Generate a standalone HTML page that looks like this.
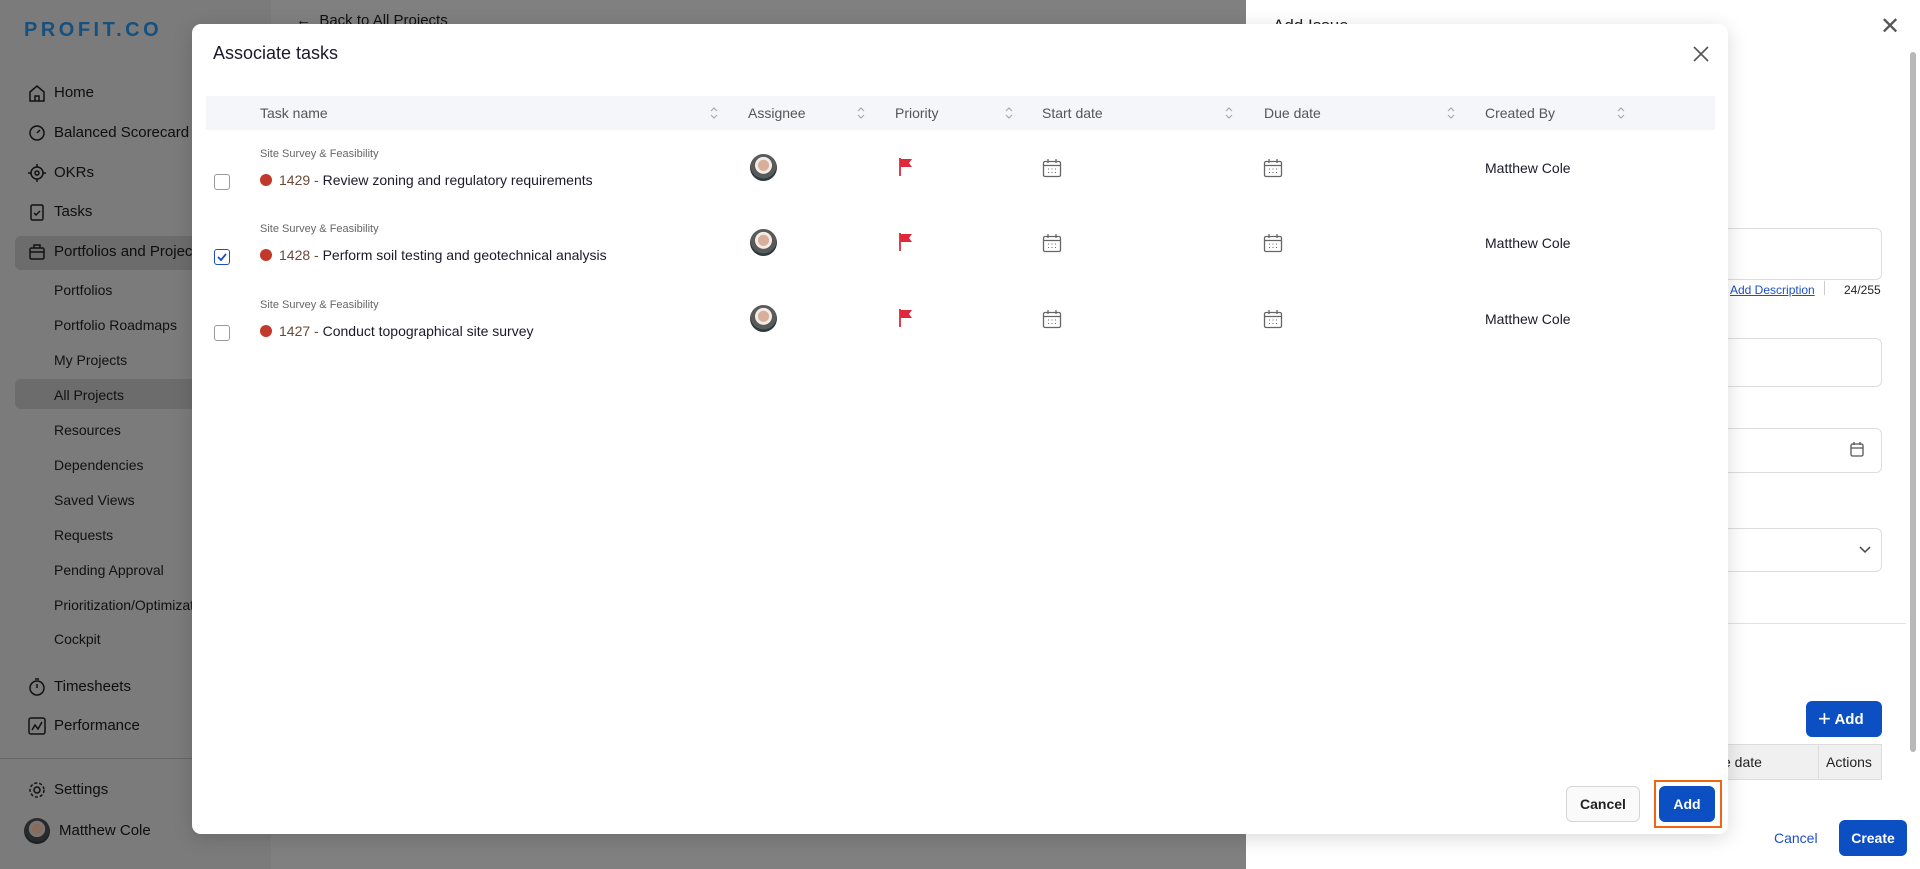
<!DOCTYPE html>
<html><head><meta charset="utf-8">
<style>
*{box-sizing:border-box;margin:0;padding:0}
body{width:1920px;height:869px;overflow:hidden;position:relative;font-family:"Liberation Sans",sans-serif;background:#808080;color:#111}
.a{position:absolute;white-space:nowrap}
#side{position:absolute;left:0;top:0;width:271px;height:869px;background:#7b7b7b}
.nav{position:absolute;left:54px;font-size:15px;color:#0e0e0e}
.sub{position:absolute;left:54px;font-size:14px;color:#111}
.ic{position:absolute;left:27px;width:20px;height:20px}
.hl{position:absolute;left:15px;width:256px;background:#6c6c6c;border-radius:6px}
#drawer{position:absolute;left:1246px;top:0;width:674px;height:869px;background:#fff}
.inp{position:absolute;border:1px solid #ddd;border-radius:6px;background:#fff}
#modal{position:absolute;left:192px;top:24px;width:1536px;height:810px;background:#fff;border-radius:9px;box-shadow:0 4px 20px rgba(0,0,0,.15)}
.th{position:absolute;top:19px;font-size:14px;color:#555}
.sort{position:absolute;top:13px;width:10px;height:16px}
.cat{position:absolute;left:68px;font-size:11px;color:#666}
.tt{position:absolute;left:68px;font-size:14px;color:#1a1a2a}
.tt .d{display:inline-block;width:12px;height:12px;border-radius:50%;background:#c0392b;vertical-align:-1px;margin-right:7px}
.tt .n{color:#6b4a3a}
.cb{position:absolute;left:22px;width:16px;height:16px;border:1px solid #999;border-radius:3px;background:#fff}
.av{position:absolute;left:558px;width:27px;height:27px;border-radius:50%;background:radial-gradient(circle at 50% 42%,#d8b09a 0 26%,#f0ece8 28% 40%,#5a5a5a 42% 62%,#2a3a40 64%)}
.mc{position:absolute;left:1293px;font-size:14px;color:#1a1a2a}
</style></head><body>
<div id="side">
  <div class="a" style="left:24px;top:19px;font-size:20px;font-weight:bold;letter-spacing:3.5px;color:#16507e">PROFIT.CO</div>
  <div class="hl" style="top:236px;height:34px"></div>
  <div class="hl" style="top:379px;height:30px"></div>
  <svg class="ic" style="top:83px" viewBox="0 0 20 20" fill="none" stroke="#111" stroke-width="1.5"><path d="M3 9l7-6 7 6v9H3z M8 18v-5h4v5"/></svg>
  <div class="nav" style="top:84px">Home</div>
  <svg class="ic" style="top:123px" viewBox="0 0 20 20" fill="none" stroke="#111" stroke-width="1.5"><circle cx="10" cy="10" r="7"/><path d="M10 10l3-3"/></svg>
  <div class="nav" style="top:124px">Balanced Scorecard</div>
  <svg class="ic" style="top:163px" viewBox="0 0 20 20" fill="none" stroke="#111" stroke-width="1.5"><circle cx="10" cy="10" r="6"/><circle cx="10" cy="10" r="2"/><path d="M10 1v3M10 16v3M1 10h3M16 10h3"/></svg>
  <div class="nav" style="top:164px">OKRs</div>
  <svg class="ic" style="top:202px" viewBox="0 0 20 20" fill="none" stroke="#111" stroke-width="1.5"><rect x="4" y="3" width="12" height="15" rx="1.5"/><path d="M7 11l2 2 4-4"/></svg>
  <div class="nav" style="top:203px">Tasks</div>
  <svg class="ic" style="top:242px" viewBox="0 0 20 20" fill="none" stroke="#111" stroke-width="1.5"><rect x="3" y="6" width="14" height="11" rx="1.5"/><path d="M7 6V3h6v3M3 10h14"/></svg>
  <div class="nav" style="top:243px">Portfolios and Projects</div>
  <div class="sub" style="top:282px">Portfolios</div>
  <div class="sub" style="top:317px">Portfolio Roadmaps</div>
  <div class="sub" style="top:352px">My Projects</div>
  <div class="sub" style="top:387px">All Projects</div>
  <div class="sub" style="top:422px">Resources</div>
  <div class="sub" style="top:457px">Dependencies</div>
  <div class="sub" style="top:492px">Saved Views</div>
  <div class="sub" style="top:527px">Requests</div>
  <div class="sub" style="top:562px">Pending Approval</div>
  <div class="sub" style="top:597px">Prioritization/Optimization</div>
  <div class="sub" style="top:631px">Cockpit</div>
  <svg class="ic" style="top:677px" viewBox="0 0 20 20" fill="none" stroke="#111" stroke-width="1.5"><circle cx="10" cy="11" r="7"/><path d="M10 11V7M8 2h4"/></svg>
  <div class="nav" style="top:678px">Timesheets</div>
  <svg class="ic" style="top:716px" viewBox="0 0 20 20" fill="none" stroke="#111" stroke-width="1.5"><rect x="2" y="2" width="16" height="16" rx="2"/><path d="M5 14l3-5 3 4 4-7"/></svg>
  <div class="nav" style="top:717px">Performance</div>
  <div class="a" style="left:0;top:758px;width:271px;height:1px;background:#666"></div>
  <svg class="ic" style="top:780px" viewBox="0 0 20 20" fill="none" stroke="#111" stroke-width="1.5"><circle cx="10" cy="10" r="3"/><circle cx="10" cy="10" r="7" stroke-dasharray="3 2"/></svg>
  <div class="nav" style="top:781px">Settings</div>
  <div class="a" style="left:24px;top:818px;width:26px;height:26px;border-radius:50%;background:radial-gradient(circle at 50% 42%,#8a6a58 0 26%,#777 28% 40%,#2a2a2a 42% 62%,#1a2228 64%)"></div>
  <div class="nav" style="left:59px;top:822px">Matthew Cole</div>
</div>
<div class="a" style="left:296px;top:12px;font-size:15px;color:#111">&larr;&nbsp;&nbsp;Back to All Projects</div>
<div id="drawer">
  <div class="a" style="left:27px;top:16px;font-size:17px;color:#222">Add Issue</div>
  <div class="a" style="left:634px;top:12px;font-size:24px;color:#555">&#x2715;</div>
  <div class="a" style="left:664px;top:52px;width:6px;height:700px;background:#b8b8b8;border-radius:3px"></div>
  <div class="inp" style="left:300px;top:228px;width:336px;height:52px"></div>
  <div class="a" style="left:484px;top:283px;font-size:12px;color:#1d4fc4;text-decoration:underline">Add Description </div>
  <div class="a" style="left:578px;top:281px;width:1px;height:14px;background:#ccc"></div>
  <div class="a" style="left:598px;top:283px;font-size:12px;color:#222">24/255</div>
  <div class="inp" style="left:300px;top:338px;width:336px;height:49px"></div>
  <div class="inp" style="left:300px;top:428px;width:336px;height:45px"></div>
  <svg class="a" style="left:604px;top:441px" width="14" height="16" viewBox="0 0 14 16" fill="none" stroke="#555" stroke-width="1.3"><rect x="1" y="3" width="12" height="12" rx="1.5"/><path d="M1 7h12M4 1v3M10 1v3"/></svg>
  <div class="inp" style="left:300px;top:528px;width:336px;height:44px"></div>
  <svg class="a" style="left:612px;top:545px" width="14" height="10" viewBox="0 0 14 10" fill="none" stroke="#444" stroke-width="1.5"><path d="M2 2l5 5 5-5"/></svg>
  <div class="a" style="left:0;top:623px;width:660px;height:1px;background:#e2e2e2"></div>
  <div class="a" style="left:560px;top:701px;width:76px;height:36px;background:#0c4fc2;border-radius:6px;color:#fff;font-size:15px;font-weight:bold;line-height:36px;padding-left:12px"><span style="font-size:22px;font-weight:normal;vertical-align:-2px">+</span> Add</div>
  <div class="a" style="left:444px;top:744px;width:192px;height:36px;background:#f0f0f0;border:1px solid #ddd"></div>
  <div class="a" style="left:572px;top:744px;width:1px;height:36px;background:#ddd"></div>
  <div class="a" style="left:477px;top:754px;font-size:14px;color:#222">e date</div>
  <div class="a" style="left:580px;top:754px;font-size:14px;color:#222">Actions</div>
  <div class="a" style="left:528px;top:830px;font-size:14px;color:#1d4fc4">Cancel</div>
  <div class="a" style="left:593px;top:820px;width:68px;height:36px;background:#0c4fc2;border-radius:6px;color:#fff;font-size:14px;font-weight:bold;line-height:36px;text-align:center">Create</div>
</div>
<div id="modal">
  <div class="a" style="left:21px;top:19px;font-size:18px;color:#1a1a2a">Associate tasks</div>
  <svg class="a" style="left:1500px;top:21px" width="18" height="18" viewBox="0 0 18 18" stroke="#555" stroke-width="1.6"><path d="M2 2l14 14M16 2L2 16"/></svg>
  <div class="a" style="left:14px;top:72px;width:1509px;height:34px;background:#f5f6fa">
    <div class="th" style="left:54px;top:9px">Task name</div>
    <div class="th" style="left:542px;top:9px">Assignee</div>
    <div class="th" style="left:689px;top:9px">Priority</div>
    <div class="th" style="left:836px;top:9px">Start date</div>
    <div class="th" style="left:1058px;top:9px">Due date</div>
    <div class="th" style="left:1279px;top:9px">Created By</div>
    <svg class="sort" style="left:503px;top:9px" viewBox="0 0 10 16" fill="none" stroke="#aaa" stroke-width="1.2"><path d="M2 6l3-3 3 3M2 10l3 3 3-3"/></svg>
    <svg class="sort" style="left:650px;top:9px" viewBox="0 0 10 16" fill="none" stroke="#aaa" stroke-width="1.2"><path d="M2 6l3-3 3 3M2 10l3 3 3-3"/></svg>
    <svg class="sort" style="left:798px;top:9px" viewBox="0 0 10 16" fill="none" stroke="#aaa" stroke-width="1.2"><path d="M2 6l3-3 3 3M2 10l3 3 3-3"/></svg>
    <svg class="sort" style="left:1018px;top:9px" viewBox="0 0 10 16" fill="none" stroke="#aaa" stroke-width="1.2"><path d="M2 6l3-3 3 3M2 10l3 3 3-3"/></svg>
    <svg class="sort" style="left:1240px;top:9px" viewBox="0 0 10 16" fill="none" stroke="#aaa" stroke-width="1.2"><path d="M2 6l3-3 3 3M2 10l3 3 3-3"/></svg>
    <svg class="sort" style="left:1410px;top:9px" viewBox="0 0 10 16" fill="none" stroke="#aaa" stroke-width="1.2"><path d="M2 6l3-3 3 3M2 10l3 3 3-3"/></svg>
  </div>

  <div class="cat" style="top:124px">Site Survey &amp; Feasibility</div>
  <div class="tt" style="top:148px"><span class="d"></span><span class="n">1429 - </span>Review zoning and regulatory requirements</div>
  <div class="cb" style="top:150px"></div>
  <div class="av" style="top:130px"></div>
  <svg class="a" style="left:706px;top:133px" width="16" height="20" viewBox="0 0 16 20"><path d="M2 1v18" stroke="#e0283a" stroke-width="1.8"/><path d="M2 2h12l-3 4 3 4H2z" fill="#e0283a"/></svg>
  <svg class="a" style="left:850px;top:134px" width="20" height="20" viewBox="0 0 20 20" fill="none" stroke="#666" stroke-width="1.3"><rect x="1.5" y="3.5" width="17" height="15" rx="1.5"/><path d="M1.5 7.5h17M6 1v4M14 1v4"/><path d="M6 11h1M9.5 11h1M13 11h1M6 14.5h1M9.5 14.5h1M13 14.5h1" stroke-width="1.1"/></svg>
  <svg class="a" style="left:1071px;top:134px" width="20" height="20" viewBox="0 0 20 20" fill="none" stroke="#666" stroke-width="1.3"><rect x="1.5" y="3.5" width="17" height="15" rx="1.5"/><path d="M1.5 7.5h17M6 1v4M14 1v4"/><path d="M6 11h1M9.5 11h1M13 11h1M6 14.5h1M9.5 14.5h1M13 14.5h1" stroke-width="1.1"/></svg>
  <div class="mc" style="top:136px">Matthew Cole</div>

  <div class="cat" style="top:199px">Site Survey &amp; Feasibility</div>
  <div class="tt" style="top:223px"><span class="d"></span><span class="n">1428 - </span>Perform soil testing and geotechnical analysis</div>
  <div class="cb" style="top:225px;border-color:#1d4fc4"><svg width="14" height="14" viewBox="0 0 14 14" style="position:absolute;left:0;top:0"><path d="M3 7l3 3 5-6" fill="none" stroke="#1d4fc4" stroke-width="1.8"/></svg></div>
  <div class="av" style="top:205px"></div>
  <svg class="a" style="left:706px;top:208px" width="16" height="20" viewBox="0 0 16 20"><path d="M2 1v18" stroke="#e0283a" stroke-width="1.8"/><path d="M2 2h12l-3 4 3 4H2z" fill="#e0283a"/></svg>
  <svg class="a" style="left:850px;top:209px" width="20" height="20" viewBox="0 0 20 20" fill="none" stroke="#666" stroke-width="1.3"><rect x="1.5" y="3.5" width="17" height="15" rx="1.5"/><path d="M1.5 7.5h17M6 1v4M14 1v4"/><path d="M6 11h1M9.5 11h1M13 11h1M6 14.5h1M9.5 14.5h1M13 14.5h1" stroke-width="1.1"/></svg>
  <svg class="a" style="left:1071px;top:209px" width="20" height="20" viewBox="0 0 20 20" fill="none" stroke="#666" stroke-width="1.3"><rect x="1.5" y="3.5" width="17" height="15" rx="1.5"/><path d="M1.5 7.5h17M6 1v4M14 1v4"/><path d="M6 11h1M9.5 11h1M13 11h1M6 14.5h1M9.5 14.5h1M13 14.5h1" stroke-width="1.1"/></svg>
  <div class="mc" style="top:211px">Matthew Cole</div>

  <div class="cat" style="top:275px">Site Survey &amp; Feasibility</div>
  <div class="tt" style="top:299px"><span class="d"></span><span class="n">1427 - </span>Conduct topographical site survey</div>
  <div class="cb" style="top:301px"></div>
  <div class="av" style="top:281px"></div>
  <svg class="a" style="left:706px;top:284px" width="16" height="20" viewBox="0 0 16 20"><path d="M2 1v18" stroke="#e0283a" stroke-width="1.8"/><path d="M2 2h12l-3 4 3 4H2z" fill="#e0283a"/></svg>
  <svg class="a" style="left:850px;top:285px" width="20" height="20" viewBox="0 0 20 20" fill="none" stroke="#666" stroke-width="1.3"><rect x="1.5" y="3.5" width="17" height="15" rx="1.5"/><path d="M1.5 7.5h17M6 1v4M14 1v4"/><path d="M6 11h1M9.5 11h1M13 11h1M6 14.5h1M9.5 14.5h1M13 14.5h1" stroke-width="1.1"/></svg>
  <svg class="a" style="left:1071px;top:285px" width="20" height="20" viewBox="0 0 20 20" fill="none" stroke="#666" stroke-width="1.3"><rect x="1.5" y="3.5" width="17" height="15" rx="1.5"/><path d="M1.5 7.5h17M6 1v4M14 1v4"/><path d="M6 11h1M9.5 11h1M13 11h1M6 14.5h1M9.5 14.5h1M13 14.5h1" stroke-width="1.1"/></svg>
  <div class="mc" style="top:287px">Matthew Cole</div>

  <div class="a" style="left:1374px;top:762px;width:74px;height:36px;border:1px solid #d6d6d6;border-radius:6px;background:#fafafa;font-size:14px;font-weight:bold;color:#222;line-height:34px;text-align:center">Cancel</div>
  <div class="a" style="left:1462px;top:756px;width:68px;height:48px;border:2px solid #f06414"></div>
  <div class="a" style="left:1467px;top:762px;width:56px;height:36px;background:#0c4fc2;border-radius:6px;font-size:14px;font-weight:bold;color:#fff;line-height:36px;text-align:center">Add</div>
</div>
</body></html>
